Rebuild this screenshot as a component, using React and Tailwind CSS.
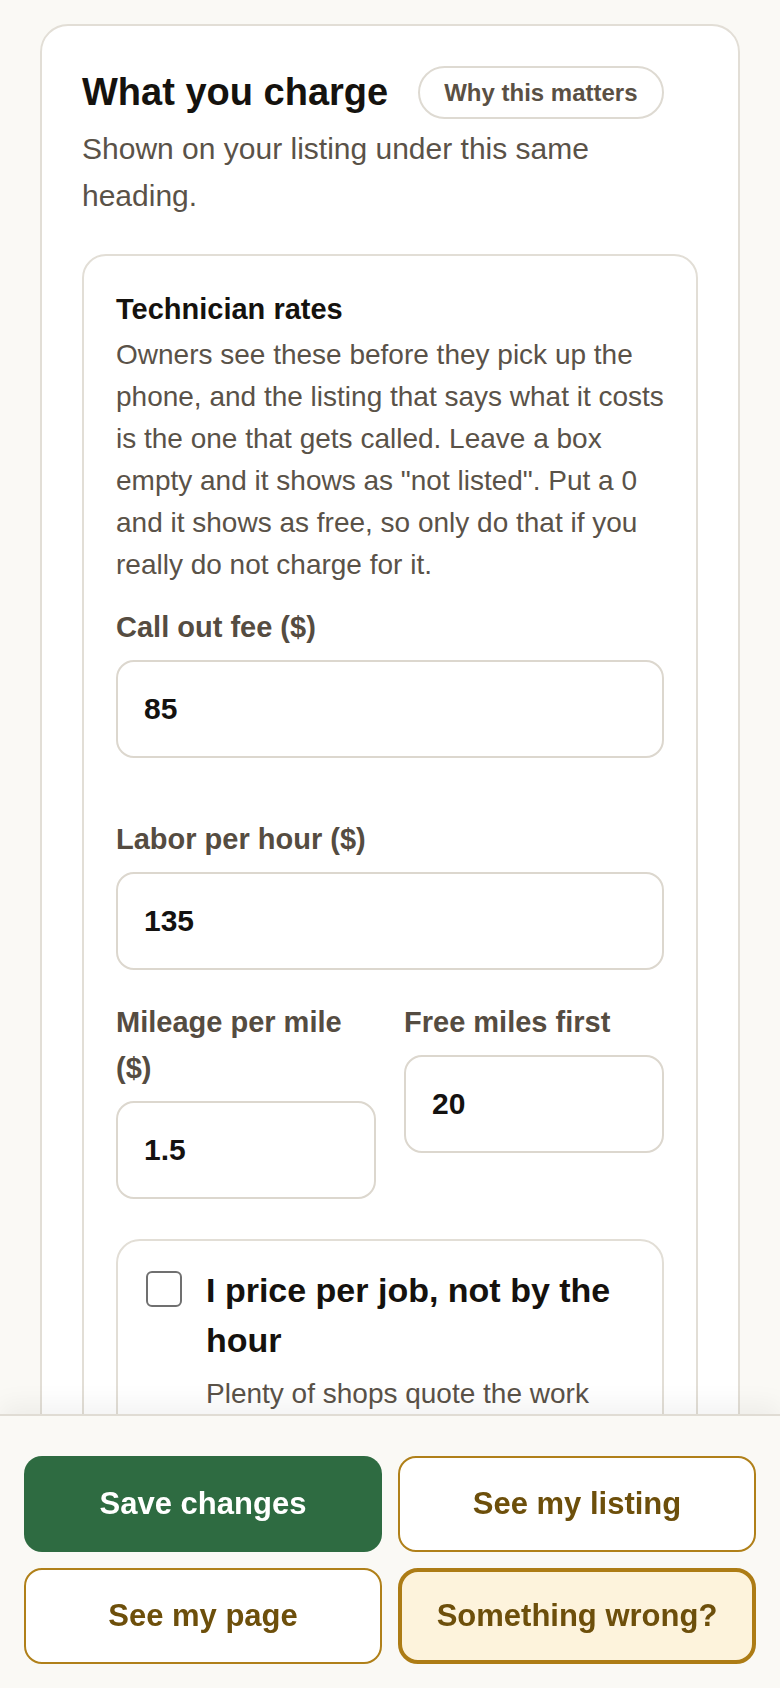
import React, { useState } from 'react'

const font = { fontFamily: '"Liberation Sans", Arial, Helvetica, sans-serif' }

function Field({ label, value, className = '' }) {
  return (
    <label className={`flex flex-col ${className}`}>
      <span className="text-[29px] leading-[46px] font-bold text-[#554c41]">{label}</span>
      <input
        type="text"
        inputMode="decimal"
        defaultValue={value}
        className="mt-[10px] h-[98px] w-full rounded-[18px] border-2 border-[#dcd7ce] bg-white px-[26px] text-[30px] font-bold text-[#141210] outline-none"
      />
    </label>
  )
}

function RatesCard() {
  const [perJob, setPerJob] = useState(false)

  return (
    <div className="mt-[35px] rounded-[24px] border-2 border-[#e2ded6] bg-white px-[32px] pt-[32px] pb-[40px]">
      <h3 className="text-[29px] leading-[42px] font-bold text-[#15120e]">Technician rates</h3>
      <p className="mt-[4px] text-[28px] leading-[42px] text-[#5a5248]">
        Owners see these before they pick up the phone, and the listing that says what it costs
        is the one that gets called. Leave a box empty and it shows as "not listed". Put a 0 and
        it shows as free, so only do that if you really do not charge for it.
      </p>

      <Field label="Call out fee ($)" value="85" className="mt-[18px]" />
      <Field label="Labor per hour ($)" value="135" className="mt-[58px]" />

      <div className="mt-[29px] grid grid-cols-2 items-start gap-[28px]">
        <Field label="Mileage per mile ($)" value="1.5" />
        <Field label="Free miles first" value="20" />
      </div>

      <div className="mt-[40px] rounded-[24px] border-2 border-[#e2ded6] bg-white px-[28px] pt-[24px] pb-[32px]">
        <label className="flex items-start gap-[24px]">
          <input
            type="checkbox"
            checked={perJob}
            onChange={e => setPerJob(e.target.checked)}
            className="mt-[6px] h-[36px] w-[36px] shrink-0 appearance-none rounded-[6px] border-2 border-[#707070] bg-white"
          />
          <span className="flex flex-col">
            <span className="text-[34px] leading-[50px] font-bold text-[#15120e]">
              I price per job, not by the hour
            </span>
            <span className="mt-[8px] text-[28px] leading-[42px] text-[#5a5248]">
              Plenty of shops quote the work before they start.
            </span>
          </span>
        </label>
      </div>
    </div>
  )
}

function ActionBar() {
  return (
    <div className="fixed inset-x-0 bottom-0 border-t-2 border-[#e0dcd4] bg-[#faf9f5] px-6 pt-10 pb-6 shadow-[0_-10px_24px_rgba(0,0,0,0.05)]">
      <div className="grid grid-cols-2 gap-4">
        <button className="h-[96px] rounded-[18px] bg-[#2e6b41] text-[31px] font-bold text-white">
          Save changes
        </button>
        <button className="h-[96px] rounded-[18px] border-2 border-[#b08019] bg-white text-[31px] font-bold text-[#6d4f0b]">
          See my listing
        </button>
        <button className="h-[96px] rounded-[18px] border-2 border-[#b08019] bg-white text-[31px] font-bold text-[#6d4f0b]">
          See my page
        </button>
        <button className="h-[96px] rounded-[20px] border-4 border-[#ad7c15] bg-[#fdf3dc] text-[31px] font-bold text-[#6d4f0b]">
          Something wrong?
        </button>
      </div>
    </div>
  )
}

export default function App() {
  return (
    <div style={font} className="min-h-screen bg-[#faf9f5] px-[40px] pt-[24px] pb-[320px]">
      <section className="rounded-[28px] border-2 border-[#e2ded6] bg-white px-[40px] pt-[40px] pb-[48px]">
        <div className="flex items-center gap-[30px]">
          <h2 className="text-[38px] leading-[53px] font-bold text-[#15120e]">What you charge</h2>
          <button className="h-[53px] rounded-full border-2 border-[#dedad2] bg-white px-[24px] text-[24px] font-bold text-[#5a5044]">
            Why this matters
          </button>
        </div>
        <p className="mt-[6px] text-[30px] leading-[47px] text-[#5a5248]">
          Shown on your listing under this same heading.
        </p>

        <RatesCard />
      </section>
      <ActionBar />
    </div>
  )
}
